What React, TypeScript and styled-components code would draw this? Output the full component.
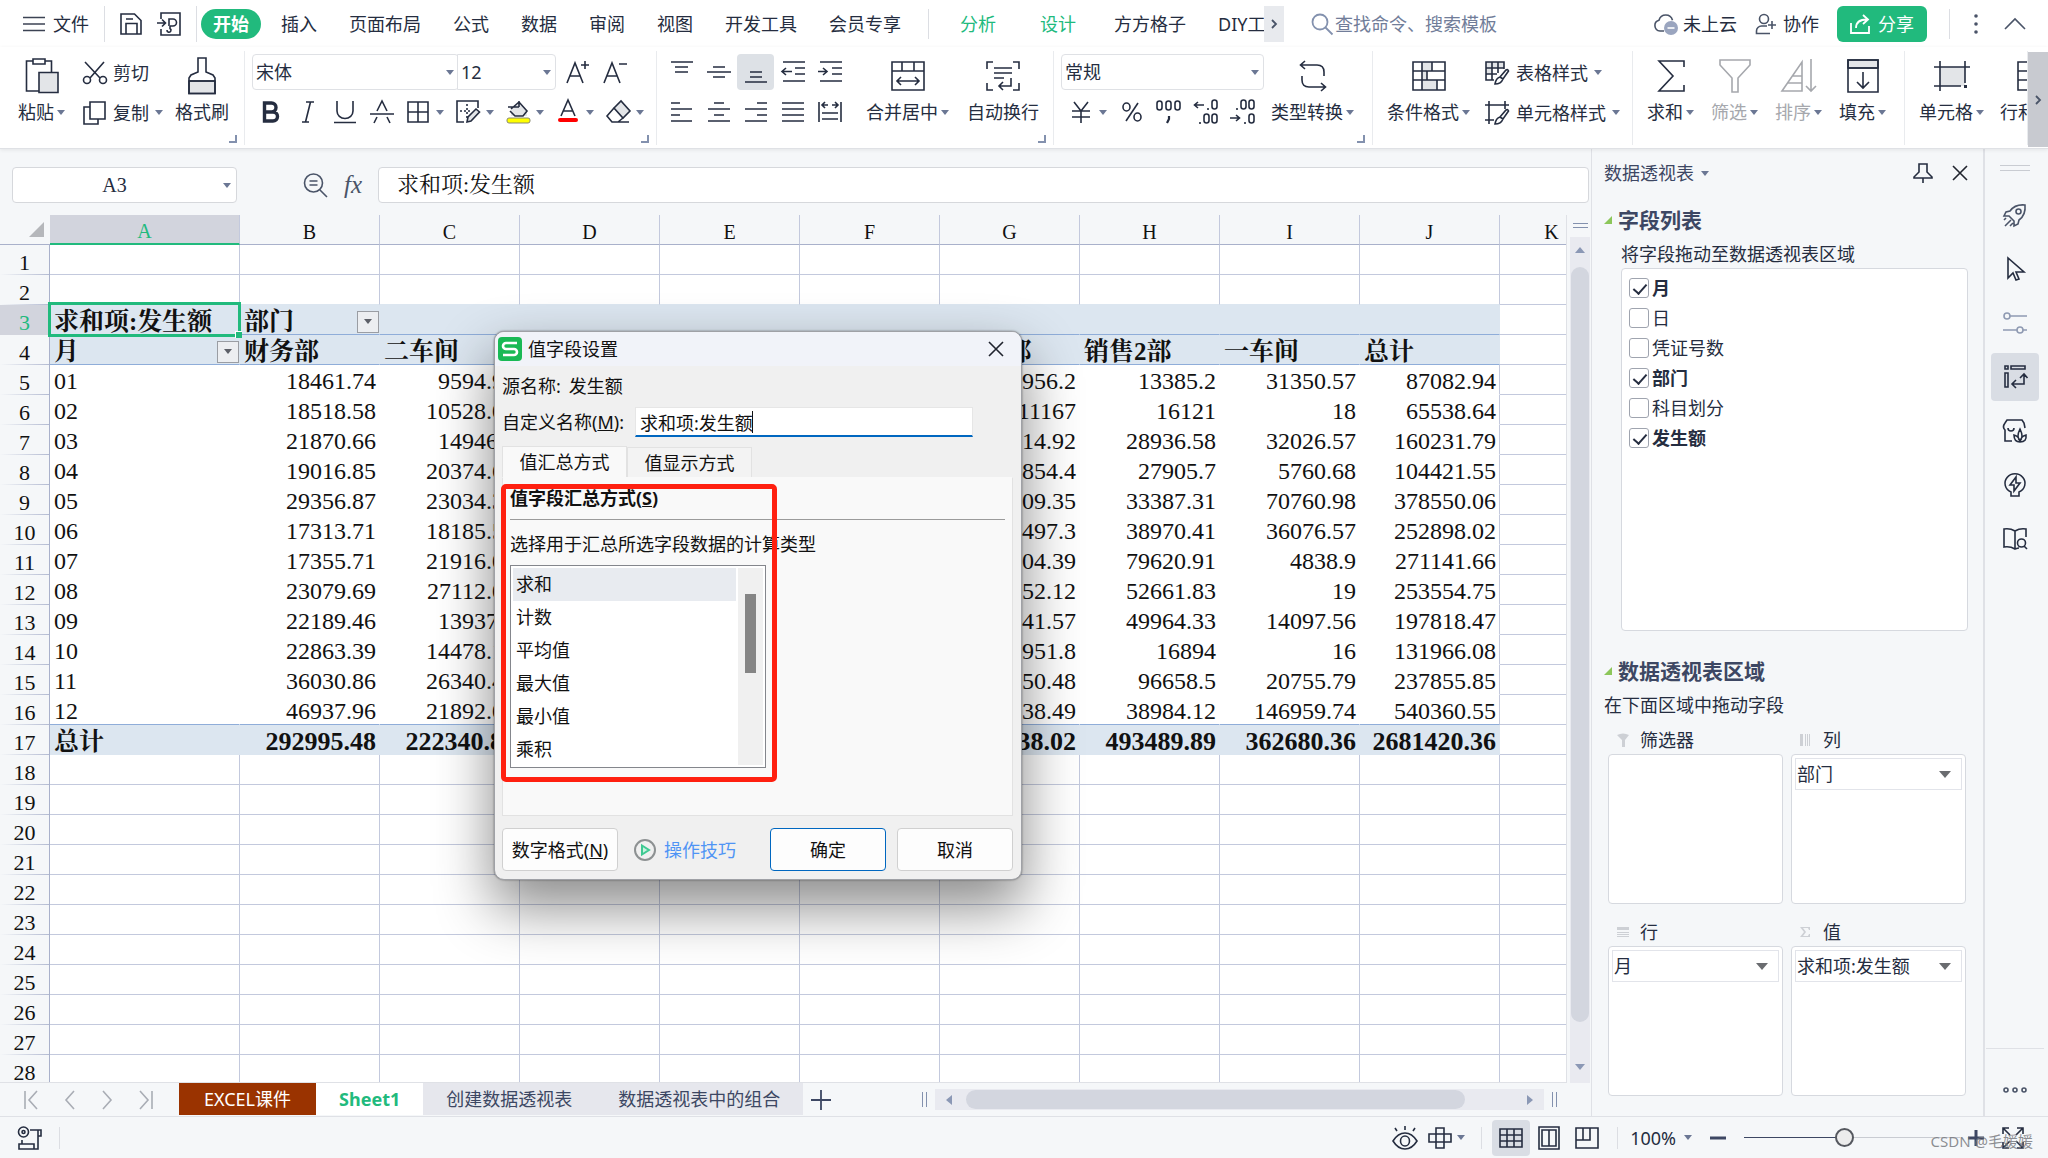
import React from "react";
import styled, { createGlobalStyle, css } from "styled-components";

const UI = `"Noto Sans", "Noto Sans CJK SC", sans-serif`;
const SONG = `"Liberation Serif", "Noto Serif CJK SC", "Noto Sans CJK SC", serif`;
const INK = "#252d40";
const SLATE = "#6b7794";
const GREEN = "#21ba7d";
const GRID = "#c3c9dd";
const RULE = "#8fadd9";
const BAND = "#dce6f0";
const PAPER = "#f5f7f9";

const GlobalStyle = createGlobalStyle`
  * { box-sizing: border-box; }
  body { margin: 0; background: ${PAPER}; color: ${INK}; font: 18px/24px ${UI}; overflow: hidden; }
  button, input, select { font: inherit; color: inherit; margin: 0; padding: 0; border: 0; background: none; outline: none; }
  button { cursor: pointer; white-space: nowrap; }
  select { appearance: none; }
  svg { display: block; flex: none; overflow: visible; }
`;

/* ---------- icons ---------- */

type IcoProps = { w?: number; h?: number; color?: string; sw?: number; children: React.ReactNode };
const Ico = ({ w = 24, h = 24, color = INK, sw = 2, children }: IcoProps) => (
  <svg width={w} height={h} viewBox={`0 0 ${w} ${h}`} fill="none" stroke={color} strokeWidth={sw} aria-hidden="true">
    {children}
  </svg>
);
const Caret = ({ color = SLATE }: { color?: string }) => (
  <svg width="8" height="5" viewBox="0 0 8 5" aria-hidden="true"><path d="M0 0h8L4 5z" fill={color} /></svg>
);
const T = 1.6;
const FILL = "#e3e5e8";

const MenuIcon = () => <Ico w={22} h={16} sw={1.6} color="#3c4354"><path d="M0 1.5h22M0 8h22M0 14.5h22" /></Ico>;
const SaveIcon = () => <Ico w={22} h={22} sw={T}><path d="M1 1h13.500l6.500 6.500V21H1zM6 21v-10.500h11V21M6 6h7" /></Ico>;
const ExportIcon = () => (
  <Ico w={24} h={24} sw={T}><path d="M4 7V1h19v22H4v-6M0 11h8M5 7.500l3.500 3.500L5 14.500M12 14V7h4a3.500 3.500 0 0 1 0 7h-3M13 14v2.500a2 2 0 1 1-3 1.500" /></Ico>
);
const SearchIcon = () => <Ico w={22} h={22} sw={1.8} color="#8391ae"><circle cx="9" cy="9" r="7.500" /><path d="M14.500 14.500l7 7" /></Ico>;
const CloudIcon = () => (
  <Ico w={26} h={22} sw={T} color="#4a5468">
    <path d="M11 18H7a5.500 5.500 0 0 1-1-10.800 7 7 0 0 1 13.500 0" />
    <circle cx="18" cy="15" r="7" fill="#9aa5bf" stroke="none" /><path d="M14.500 15h7" stroke="#fff" />
  </Ico>
);
const PersonIcon = () => (
  <Ico w={22} h={22} sw={T} color="#4a5468"><circle cx="9" cy="6" r="4.500" /><path d="M15 20.500H1.500V18a5 5 0 0 1 5-5H12M17 8v8M13 12h8" /></Ico>
);
const ShareIcon = () => <Ico w={20} h={20} sw={1.8} color="#fff"><path d="M1 9v10h18v-7M6 14c0-6 4-8.500 11-8.500M13 1l5 4.500-5 4.500" /></Ico>;
const DotsIcon = () => (
  <Ico w={4} h={20}><g fill="#4a5468" stroke="none"><circle cx="2" cy="2" r="1.800" /><circle cx="2" cy="10" r="1.800" /><circle cx="2" cy="18" r="1.800" /></g></Ico>
);
const UpIcon = () => <Ico w={22} h={12} sw={T} color="#4a5468"><path d="M1 11L11 1l10 10" /></Ico>;
const ChevronIcon = () => <Ico w={6} h={10} sw={1.8} color="#4a5468"><path d="M1 1l4 4-4 4" /></Ico>;

const PasteIcon = () => (
  <Ico w={34} h={36} sw={T}><path d="M8 3H1.500v30H14M20 3h6.500v11" /><path d="M8 1h12v5H8z" /><path d="M14 14.500h19v20H14z" fill={FILL} /></Ico>
);
const CutIcon = () => <Ico sw={T}><path d="M2 1l15 16M21 1L7 17" /><circle cx="4" cy="19" r="3.500" /><circle cx="20" cy="19" r="3.500" /></Ico>;
const CopyIcon = () => <Ico sw={T}><path d="M7 6H1v17h14v-5" /><path d="M7 1h15v17H7z" /></Ico>;
const BrushIcon = () => (
  <Ico w={30} h={38} sw={T}><path d="M2 24h26v12.500H2z" fill={FILL} /><path d="M11 1h8v14l7 3 2 3v15.500H2V21l2-3 7-3zM2 24h26" /></Ico>
);
const FontUpIcon = () => <Ico sw={T}><path d="M1 23L9 3l8 20M4 16h10M19 1v8M15 5h8" /></Ico>;
const FontDownIcon = () => <Ico sw={T}><path d="M1 23L9 3l8 20M4 16h10M16 4h8" /></Ico>;
const BoldIcon = () => <Ico w={18} h={22} sw={3.4}><path d="M2.500 2h7a4.500 4.500 0 0 1 0 9h-7zM2.500 11h8.500a4.500 4.500 0 0 1 0 9H2.500z" /></Ico>;
const ItalicIcon = () => <Ico w={14} h={22} sw={T}><path d="M5 1h8M1 21h7M9.500 1L4.500 21" /></Ico>;
const UnderIcon = () => <Ico w={22} h={22} sw={T}><path d="M3 0v10a8 7.500 0 0 0 16 0V0M0 21.500h22" /></Ico>;
const StrikeIcon = () => <Ico w={24} h={22} sw={T}><path d="M4 22l3-6M7 10l5-10 5 10M17 16l3 6M0 13h24" /></Ico>;
const BorderIcon = () => <Ico w={22} h={22} sw={T}><path d="M1 1h20v20H1zM11 1v20M1 11h20" /></Ico>;
const DrawBorderIcon = () => (
  <Ico sw={T}><path d="M22 8V1H1v21h7" /><path d="M4 11h10M11 4v14" strokeDasharray="2 2" /><path d="M11 22l1-5 8-8 3.500 3L15 21z" fill={FILL} /></Ico>
);
const FillIcon = () => (
  <Ico sw={T}><path d="M5 10l8-8 8 9v5H5z" fill={FILL} stroke="none" /><path d="M5 9l8-7 8 9-4 5H9L4 11M2 7h11M13 1v6" /><rect x="1" y="18" width="23" height="5" rx="2" fill="#ffff00" stroke="#8a8a70" strokeWidth="1" /></Ico>
);
const FontColorIcon = () => <Ico sw={T}><path d="M5 16L12 0l7 16M7 11h10" /><rect x="2" y="18" width="20" height="4" rx="2" fill="#f00" stroke="none" /></Ico>;
const EraserIcon = () => <Ico sw={T}><path d="M8 8l7-7 9 10-7 7z" fill={FILL} /><path d="M8 8l-7 8 5 6h6l5-4M6 22h17" /></Ico>;

const lines = (rows: [number, number, number][]) => rows.map(([x1, x2, y]) => `M${x1} ${y}H${x2}`).join("");
const LineIcon = ({ d }: { d: string }) => <Ico w={24} h={24} sw={T}><path d={d} /></Ico>;
const VTop = () => <LineIcon d={lines([[1, 23, 2], [5, 18, 7], [5, 18, 12]])} />;
const VMid = () => <LineIcon d={lines([[6, 18, 7], [0, 24, 12], [6, 18, 17]])} />;
const VBot = () => <LineIcon d={lines([[6, 18, 12], [6, 18, 17], [1, 23, 22]])} />;
const Outdent = () => <LineIcon d={lines([[2, 24, 2], [14, 24, 8], [14, 24, 14], [2, 24, 21]]) + "M1 11.500h10M5 8l-4 3.500 4 3.500"} />;
const Indent = () => <LineIcon d={lines([[2, 24, 2], [14, 24, 8], [14, 24, 14], [2, 24, 21]]) + "M0 11.500h9M5 8l4 3.500-4 3.500"} />;
const ALeft = () => <LineIcon d={lines([[1, 10, 3], [1, 22, 9], [1, 10, 15], [1, 22, 21]])} />;
const ACenter = () => <LineIcon d={lines([[7, 17, 3], [1, 23, 9], [7, 17, 15], [1, 23, 21]])} />;
const ARight = () => <LineIcon d={lines([[13, 23, 3], [1, 23, 9], [13, 23, 15], [1, 23, 21]])} />;
const AJustify = () => <LineIcon d={lines([[1, 23, 3], [1, 23, 9], [1, 23, 15], [1, 23, 21]])} />;
const Distribute = () => <LineIcon d="M1 2v20M23 2v20M4 13h16M4 19h16M4 5h6M14 5h6M7 2L4 5l3 3M17 2l3 3-3 3" />;
const MergeIcon = () => <Ico w={34} h={30} sw={T}><path d="M1 1h32v28H1zM1 10h32M11 1v9M23 1v9M6 20h22M10 16l-4 4 4 4M24 16l4 4-4 4" /></Ico>;
const WrapIcon = () => (
  <Ico w={34} h={30} sw={T}><path d="M7 1H1v7M27 1h6v7M7 29H1v-7M27 29h6v-7M8 7h18M8 12h18M8 17h10M25 17v8H13M17 21l-4 4 4 4" /></Ico>
);
const YenIcon = () => <Ico w={20} h={22} sw={T}><path d="M3 1l7 9 7-9M10 10v12M1 10h18M1 16h18" /></Ico>;
const PercentIcon = () => <Ico w={20} h={20} sw={T}><ellipse cx="4.500" cy="5" rx="3.500" ry="4" /><ellipse cx="15.500" cy="15" rx="3.500" ry="4" /><path d="M16 1L4 19" /></Ico>;
const oval = (x: number, y: number) => <rect key={`${x}-${y}`} x={x} y={y} width="5" height="9" rx="2.500" />;
const ThousandIcon = () => <Ico w={26} h={24} sw={T}>{oval(1, 1)}{oval(10, 1)}{oval(19, 1)}<path d="M13 16v3l-2 4" strokeWidth="2.200" /></Ico>;
const DecAddIcon = () => <Ico w={26} h={24} sw={T}>{oval(19, 0)}{oval(11, 14)}{oval(19, 14)}<path d="M1 5h10M5 2L1.500 5 5 8M15 8v2M7 22v2" /></Ico>;
const DecCutIcon = () => <Ico w={26} h={24} sw={T}>{oval(11, 0)}{oval(19, 0)}{oval(19, 14)}<path d="M0 18h10M6 15l3.500 3L6 21M7 8v2M15 22v2" /></Ico>;
const ConvertIcon = () => (
  <Ico w={28} h={32} sw={T}><path d="M1.500 5H18q7 0 7 7v4M6 1L1.500 5 6 9M26.500 27H10q-7 0-7-7v-4M22 23l4.500 4-4.500 4" /></Ico>
);
const CondIcon = () => (
  <Ico w={34} h={30} sw={T}>
    <path d="M10 1h10v9H10zM10 10h5v9h-5zM10 19h15v10H10z" fill={FILL} stroke="none" />
    <path d="M1 1h32v28H1zM1 10h32M1 19h32M10 1v28M20 1v9M15 10v9M25 19v10" />
  </Ico>
);
const BrushTip = () => <path d="M15 16l6-7q2-1 2.500 1L18 18zM15 16q-4 1-5 7 6 0 8-5z" fill="#fff" />;
const TableStyleIcon = () => (
  <Ico w={25} h={24} sw={T}><path d="M1 1h18v6H7v6H1z" fill={FILL} stroke="none" /><path d="M9 19H1V1h18v7M1 7h18M1 13h11M7 1v18M13 1v11" /><BrushTip /></Ico>
);
const CellStyleIcon = () => (
  <Ico w={25} h={24} sw={T}><path d="M4 0v23M0 4h24M20 0v8M0 19h9" /><BrushTip /></Ico>
);
const SumIcon = () => <Ico w={28} h={32} sw={T}><path d="M27 7V1H2l14 15L2 31h25v-6" /></Ico>;
const FilterIcon = () => <Ico w={32} h={34} sw={T} color="#a6a8ad"><path d="M1 1h30v5L19 19v14h-6V19L1 6z" /></Ico>;
const SortIcon = () => <Ico w={36} h={34} sw={T} color="#a6a8ad"><path d="M1 32h20V3zM11 17h10M6 24h15M30 0v32M25 27l5 5 5-5" /></Ico>;
const FillDownIcon = () => <Ico w={32} h={34} sw={T}><path d="M1 1h30v8H1z" fill={FILL} /><path d="M1 1h30v32H1zM1 9h30M16 13v15M10 23l6 6 6-6" /></Ico>;
const CellIcon = () => (
  <Ico w={36} h={30} sw={T}><path d="M6 6h25v19H6z" fill={FILL} stroke="none" /><path d="M0 6h36M0 25h27M6 0v30M31 0v22" /><path d="M30 24h3v3h-3z" fill={INK} stroke="none" /></Ico>
);
const RowColIcon = () => <Ico w={34} h={30} sw={T}><path d="M8 1h25v28H8zM8 10h25M8 19h25M18 1v28" /></Ico>;
const LauncherIcon = () => <Ico w={8} h={8} sw={2} color="#8391ae"><path d="M0 7h7V0" /></Ico>;

const LensIcon = () => <Ico w={24} h={24} sw={T} color="#4a5468"><circle cx="10.500" cy="10" r="9" /><path d="M17 17l7 7M6.500 8h8M6.500 12h8" /></Ico>;
const PinIcon = () => <Ico w={20} h={20} sw={T}><path d="M6 1h8v8l5 5v1H1v-1l5-5zM10 15v5" /></Ico>;
const CloseIcon = () => <Ico w={16} h={16} sw={T} color="#20242e"><path d="M1 1l14 14M15 1L1 15" /></Ico>;

const RocketIcon = () => (
  <Ico sw={T} color="#4a5468"><path d="M7 8Q12 1 22 2q1 10-6 15l-1 4-4 2v-5L6 13H1l2-4zM3 15l-2 2M8 17l-6 6M10 20l-3 3" /><circle cx="15.500" cy="8.500" r="2.500" /></Ico>
);
const PointerIcon = () => <Ico sw={T}><path d="M5 1v20l5-5 3 7 3-1-3-7h8z" /></Ico>;
const SlidersIcon = () => <Ico sw={T} color="#8f9ab2"><circle cx="4" cy="5" r="3" /><path d="M7 5h17M0 19h14M20 19h4" /><circle cx="17" cy="19" r="3" /></Ico>;
const PivotIcon = () => <Ico sw={T}><path d="M2 1h3v3H2zM8 1h14v3H8zM2 8h3v14H2zM10 19h11V9M13 15l-4 4 4 4M17 13l4-4 3.500 4" /></Ico>;
const GalleryIcon = () => (
  <Ico sw={T}><path d="M9 22H2V11q-3-3 0-7l2-3h15l2 3 1 5M5 9q0 3 3 3t3-3" /><path d="M17 22q-4-4 0-12 4 8 0 12zM17 23q-6 0-6-7 5 1 6 7zM17 23q1-6 6-7 1 7-6 7z" /></Ico>
);
const BulbIcon = () => <Ico sw={T}><path d="M8 23h8v-4a10 9.500 0 1 0-8 0zM13 4l-6 8h4v6l6-8h-4z" /></Ico>;
const BookIcon = () => <Ico sw={T}><path d="M12 4Q7 1 1 2v18q6-1 11 2 3-1 4-1M12 4q5-3 11-2v8M12 4v18" /><circle cx="18.500" cy="16" r="4" /><path d="M21 19l3 3" /></Ico>;
const MoreIcon = () => <Ico w={24} h={6} sw={T} color="#4a5468"><circle cx="3" cy="3" r="2" /><circle cx="12" cy="3" r="2" /><circle cx="21" cy="3" r="2" /></Ico>;

const WpsLogo = () => (
  <svg width="24" height="24" viewBox="0 0 24 24" aria-hidden="true">
    <rect width="24" height="24" rx="4" fill="#19b955" />
    <path d="M19 6H8a3 3 0 0 0 0 6h8a3 3 0 0 1 0 6H5" fill="none" stroke="#fff" strokeWidth="2.600" />
  </svg>
);
const PlayIcon = () => <Ico w={22} h={22} sw={2} color="#8d9192"><circle cx="11" cy="11" r="10" /><path d="M8 6.500l7 4.500-7 4.500z" stroke="#3fc992" fill="#c9f2e0" /></Ico>;

const EyeIcon = () => <Ico sw={T}><path d="M0 15q5-8 12-8t12 8q-5 8-12 8T0 15zM12 0v4M2 2l2 3M22 2l-2 3" /><ellipse cx="12" cy="15" rx="4.500" ry="5" /></Ico>;
const CrossIcon = () => <Ico sw={T}><path d="M8 2h8v20H8zM1 8h22v8H1z" /></Ico>;
const NormalViewIcon = () => <Ico sw={T}><path d="M1 3h22v18H1zM1 9h22M1 15h22M8 3v18M15 3v18" /></Ico>;
const PageViewIcon = () => <Ico w={22} sw={T}><path d="M1 1h20v22H1zM4 4h14v16H4zM11 4v16" /></Ico>;
const BreakViewIcon = () => <Ico sw={T}><path d="M1 2h22v20H1zM1 14h14V2M8 2v12" /></Ico>;
const FullIcon = () => <Ico w={22} h={22} sw={T}><path d="M14 8l7-7M15 1h6v6M8 8L1 1M1 7V1h6M14 14l7 7M15 21h6v-6M8 14l-7 7M1 15v6h6" /></Ico>;
const MacroIcon = () => <Ico sw={T}><circle cx="5.500" cy="6" r="5" /><circle cx="5.500" cy="6" r="1.500" /><path d="M12 4h11v6h-3M20 4v19H1v-5h15v5M4 18v-4" /></Ico>;

/* ---------- shell ---------- */

const Page = styled.div`position: relative; height: 100vh; display: flex; flex-direction: column;`;
const Main = styled.main`flex: 1; min-height: 0; display: flex;`;
const Workspace = styled.section`flex: 1; min-width: 0; display: flex; flex-direction: column;`;

const VSep = styled.span<{ $h?: number; $m?: string }>`
  flex: none; width: 1px; height: ${p => p.$h ?? 36}px; margin: ${p => p.$m ?? "0"}; background: #dcdee3;
`;

/* ---------- menu bar ---------- */

const MenuBar = styled.nav`display: flex; align-items: center; height: 47px; background: #fff;`;
const MenuButton = styled.button<{ $gap?: number }>`display: flex; align-items: center; gap: ${p => p.$gap ?? 8}px;`;
const QuickAccess = styled.div`display: flex; align-items: center; gap: 15px; padding-left: 23px; width: 201px; overflow: hidden;`;
const TabStrip = styled.div`flex: 0 1 1063px; min-width: 0; display: flex; align-items: center; overflow: hidden;`;
const MenuTab = styled.button<{ $tone?: "active" | "context" }>`
  flex: none; padding: 0 16px;
  ${p => p.$tone === "active" && css`width: 60px; height: 30px; padding: 0; margin-right: 4px; border-radius: 15px; background: ${GREEN}; color: #fff; font-weight: 700;`}
  ${p => p.$tone === "context" && css`padding: 0 22px; color: ${GREEN};`}
`;
const StripNext = styled.button`flex: none; display: grid; place-items: center; width: 20px; height: 36px; background: #e8eaee;`;
const Search = styled.label`display: flex; align-items: center; gap: 2px; margin-left: 27px; color: #717d99;`;
const SearchInput = styled.input`width: 180px; &::placeholder { color: #717d99; opacity: 1; }`;
const MenuRight = styled.div`display: flex; align-items: center; gap: 18px; margin-left: auto; padding-right: 22px;`;
const ShareButton = styled.button`display: flex; align-items: center; justify-content: center; gap: 8px; width: 90px; height: 36px; border-radius: 6px; background: ${GREEN}; color: #fff;`;
const CollapseButton = styled.button`padding-left: 8px;`;

/* ---------- ribbon ---------- */

const Ribbon = styled.div`display: flex; height: 102px; background: #fff; border-bottom: 1px solid #dfe1e5; box-shadow: 0 1px 4px rgba(0, 0, 0, 0.08); z-index: 1;`;
const Group = styled.div<{ $w?: number; $pad: number; $gap?: number }>`
  position: relative; flex: ${p => (p.$w ? `none` : "1")}; width: ${p => (p.$w ? `${p.$w}px` : "auto")}; min-width: 0;
  display: flex; align-items: flex-start; gap: ${p => p.$gap ?? 0}px; margin: 4px 0 3px; padding: 3px 0 0 ${p => p.$pad}px;
  overflow: hidden; border-right: 1px solid #e9ebee;
`;
const Launcher = styled.button`position: absolute; right: 7px; bottom: 2px; width: 8px; height: 8px;`;
const BigTool = styled.button<{ $off?: boolean }>`flex: none; display: flex; flex-direction: column; align-items: center; gap: 4px; padding-top: 2px; color: ${p => (p.$off ? "#a6a8ad" : INK)};`;
const BigIcon = styled.span`display: grid; place-items: center; height: 40px;`;
const BigLabel = styled.span`display: flex; align-items: center; gap: 3px; height: 24px;`;
const Stack = styled.div<{ $m?: string }>`flex: none; display: flex; flex-direction: column; gap: 4px; margin: ${p => p.$m ?? "0"};`;
const Row = styled.div<{ $pad?: number }>`display: flex; align-items: center; height: 36px; padding-left: ${p => p.$pad ?? 0}px;`;
const SmallTool = styled.button`display: flex; align-items: center; gap: 6px; height: 36px; padding-top: 1px;`;
const IconTool = styled.button<{ $on?: boolean }>`
  flex: none; display: grid; place-items: center; width: 37px; height: 36px; border-radius: 4px; background: ${p => (p.$on ? "#dde1e6" : "transparent")};
`;
const SplitTool = styled.button`flex: none; display: flex; align-items: center; gap: 6px; width: 50px; height: 36px; padding-left: 6px;`;
const SplitIcon = styled.span`display: grid; place-items: center; width: 24px;`;
const Combo = styled.span<{ $w: number; $joined?: boolean }>`
  flex: none; display: grid; align-items: center; width: ${p => p.$w}px; height: 36px; border: 1px solid #dfe1e5;
  border-radius: ${p => (p.$joined ? "0 4px 4px 0" : "4px")}; margin: ${p => (p.$joined ? "0 3px 0 -2px" : "0")}; background: #fff;
  > * { grid-area: 1 / 1; }
  > select { width: 100%; height: 100%; padding-left: 3px; }
  > svg { justify-self: end; margin-right: 4px; pointer-events: none; }
`;
const RibbonNext = styled.button`flex: none; display: grid; place-items: center; width: 20px; margin: 5px 0 1px; background: #c8cad0;`;

/* ---------- formula bar ---------- */

const FormulaBar = styled.div`display: flex; align-items: center; height: 66px; padding: 6px 2px 0 12px;`;
const NameBox = styled.span`
  display: grid; align-items: center; width: 225px; height: 36px; border: 1px solid #d6d8dc; border-radius: 4px; background: #fff;
  > * { grid-area: 1 / 1; }
  > input { width: 100%; padding-right: 20px; text-align: center; font: 20px/34px ${SONG}; }
  > svg { justify-self: end; margin-right: 5px; }
`;
const FormulaTools = styled.div`display: flex; align-items: center; gap: 14px; padding: 0 13px 0 66px;`;
const FxButton = styled.button`width: 24px; font: italic 25px/28px "Liberation Serif", serif; color: #4a5468;`;
const FormulaInput = styled.input`flex: 1; min-width: 0; height: 36px; padding: 0 18px 5px; border: 1px solid #d6d8dc; border-radius: 4px; background: #fff; font: 22px/30px ${SONG}; color: #111;`;

/* ---------- sheet ---------- */

const SheetArea = styled.div`flex: 1; min-height: 0; display: flex;`;
const SheetClip = styled.div`flex: 1; min-width: 0; overflow: hidden; border-right: 1px solid #dfe1e6; border-bottom: 1px solid #dfe1e6; background: #fff;`;
const Sheet = styled.table`width: 1604px; table-layout: fixed; border-collapse: separate; border-spacing: 0; font: 24px/25px ${SONG}; color: #111;`;
const Col = styled.col<{ $w: number }>`width: ${p => p.$w}px;`;
const Corner = styled.td`height: 30px; padding: 0 6px 7px 0; background: ${PAPER}; border-bottom: 1px solid #a9b1cb; vertical-align: bottom; > svg { margin-left: auto; }`;
const ColHead = styled.th<{ $on?: boolean }>`
  height: 30px; padding: 5px 0 0; font-size: 20px; line-height: 23px; font-weight: 400;
  background: ${p => (p.$on ? "#d2d4dd" : PAPER)}; color: ${p => (p.$on ? GREEN : "#111")};
  border-right: 1px solid #c3c9dd; border-bottom: ${p => (p.$on ? `2px solid ${GREEN}` : "1px solid #a9b1cb")};
`;
const RowHead = styled.th<{ $on?: boolean }>`
  height: 30px; padding: 4px 0 0; font-size: 22px; line-height: 25px; font-weight: 400; color: ${p => (p.$on ? GREEN : "#111")};
  background: ${p => (p.$on ? "#d2d4dd" : `linear-gradient(90deg, ${PAPER}, #b4bbd2) bottom / 100% 1px no-repeat ${PAPER}`)};
  border-right: 1px solid #a9b1cb;
`;
type Tone = "grid" | "body" | "band";
const Cell = styled.td<{ $tone: Tone; $right: string; $bottom: string; $num?: boolean; $bold?: boolean }>`
  position: relative; height: 30px; padding: 4px 3px 0 4px; white-space: nowrap;
  background: ${p => (p.$tone === "band" ? BAND : "#fff")};
  border-right: 1px solid ${p => p.$right}; border-bottom: 1px solid ${p => p.$bottom};
  text-align: ${p => (p.$num ? "right" : "left")};
  ${p => p.$bold && css`font-weight: 700; font-size: ${p.$num ? 26 : 25}px;`}
`;
const FilterCell = styled.div`display: flex; justify-content: space-between; align-items: center; height: 25px; margin-right: -3px;`;
const FilterButton = styled.button`display: grid; place-items: center; width: 22px; height: 22px; border: 1px solid #9a9da3; background: #eceef1;`;
const Selection = styled.span`
  position: absolute; inset: -3px -2px; border: 3px solid ${GREEN}; pointer-events: none; z-index: 1;
  &::after { content: ""; position: absolute; right: -4px; bottom: -4px; width: 6px; height: 6px; background: ${GREEN}; border: solid #fff; border-width: 1px 0 0 1px; }
`;

const LETTERS = ["A", "B", "C", "D", "E", "F", "G", "H", "I", "J", "K"];
const BODY: string[][] = [
  ["01", "18461.74", "9594.93", "", "", "", "12956.2", "13385.2", "31350.57", "87082.94"],
  ["02", "18518.58", "10528.06", "", "", "", "11167", "16121", "18", "65538.64"],
  ["03", "21870.66", "14946.7", "", "", "", "21614.92", "28936.58", "32026.57", "160231.79"],
  ["04", "19016.85", "20374.62", "", "", "", "19854.4", "27905.7", "5760.68", "104421.55"],
  ["05", "29356.87", "23034.36", "", "", "", "27509.35", "33387.31", "70760.98", "378550.06"],
  ["06", "17313.71", "18185.57", "", "", "", "16497.3", "38970.41", "36076.57", "252898.02"],
  ["07", "17355.71", "21916.07", "", "", "", "24504.39", "79620.91", "4838.9", "271141.66"],
  ["08", "23079.69", "27112.05", "", "", "", "20152.12", "52661.83", "19", "253554.75"],
  ["09", "22189.46", "13937.8", "", "", "", "19541.57", "49964.33", "14097.56", "197818.47"],
  ["10", "22863.39", "14478.19", "", "", "", "16951.8", "16894", "16", "131966.08"],
  ["11", "36030.86", "26340.45", "", "", "", "31750.48", "96658.5", "20755.79", "237855.85"],
  ["12", "46937.96", "21892.09", "", "", "", "27338.49", "38984.12", "146959.74", "540360.55"],
];
const VALUES: Record<number, string[]> = {
  3: ["求和项:发生额", "部门"],
  4: ["月", "财务部", "二车间", "", "", "", "销售1部", "销售2部", "一车间", "总计"],
  17: ["总计", "292995.48", "222340.89", "", "", "", "249638.02", "493489.89", "362680.36", "2681420.36"],
};
BODY.forEach((r, i) => { VALUES[i + 5] = r; });

const SheetRow = ({ n }: { n: number }) => {
  const values = VALUES[n] ?? [];
  const band = n === 3 || n === 4 || n === 17;
  const body = n >= 5 && n <= 16;
  return (
    <tr>
      <RowHead scope="row" $on={n === 3}>{n}</RowHead>
      {LETTERS.map((l, c) => {
        const outside = c === 10;
        const tone: Tone = outside ? "grid" : band ? "band" : body ? "body" : "grid";
        let right = GRID;
        let bottom = GRID;
        if (!outside) {
          if (tone === "band") right = BAND;
          if (tone === "body" && c < 9) right = "#fff";
          if (n === 2 || n === 17) bottom = BAND;
          if (n === 3 || n === 4 || n === 16) bottom = RULE;
          if (n >= 5 && n < 16) bottom = "#fff";
        }
        const text = values[c] ?? "";
        const filter = (n === 3 && c === 1) || (n === 4 && c === 0);
        return (
          <Cell key={l} $tone={tone} $right={right} $bottom={bottom} $bold={band} $num={(body || n === 17) && c > 0}>
            {filter ? (
              <FilterCell>{text}<FilterButton aria-label={`筛选${text}`}><Caret color="#5d6068" /></FilterButton></FilterCell>
            ) : text}
            {n === 3 && c === 0 && <Selection />}
          </Cell>
        );
      })}
    </tr>
  );
};

const VScroll = styled.div`flex: none; display: flex; flex-direction: column; align-items: center; gap: 9px; width: 24px; padding: 8px 0 0 2px;`;
const SplitGrip = styled.span`width: 15px; height: 5px; border: solid #8391ae; border-width: 1px 0;`;
const VTrack = styled.div`flex: 1; display: flex; flex-direction: column; align-items: center; justify-content: space-between; width: 20px; padding: 10px 0 13px; background: #e9eaf0;`;
const VThumb = styled.span`flex: 1; width: 18px; margin: 14px 0 42px; border-radius: 9px; background: #d3d6df;`;

/* ---------- sheet tabs ---------- */

const TabBar = styled.div`display: flex; align-items: center; height: 33px;`;
const TabNav = styled.div`display: flex; align-items: center; justify-content: space-between; width: 179px; padding: 0 26px 0 24px;`;
const SheetTab = styled.button<{ $kind?: "brown" | "active" }>`
  flex: none; height: 32px; align-self: flex-start; padding: 0 23px; background: #e6e7ed; color: #3d4763;
  ${p => p.$kind === "brown" && css`padding: 0 25px; background: #9a3300; color: #fff;`}
  ${p => p.$kind === "active" && css`background: #fff; color: ${GREEN}; font-weight: 700;`}
`;
const AddTab = styled.button`padding: 0 8px;`;
const HScrollWrap = styled.div`display: flex; align-items: center; gap: 8px; width: 669px; margin-left: auto; padding-right: 34px;`;
const HGrip = styled.span`flex: none; width: 5px; height: 15px; border: solid #8391ae; border-width: 0 1px;`;
const HTrack = styled.div`flex: 1; display: flex; align-items: center; height: 21px; padding: 0 11px; background: #e9eaf0;`;
const HThumb = styled.span`flex: 1; height: 19px; margin: 0 62px 0 14px; border-radius: 10px; background: #d3d6df;`;

/* ---------- pivot pane ---------- */

const Pane = styled.aside`flex: none; width: 392px; padding: 12px 15px 0 12px; border-left: 1px solid #dfe1e6;`;
const PaneHead = styled.div`display: flex; align-items: center; justify-content: space-between; height: 24px; color: #3d4763;`;
const PaneTitle = styled.button`display: flex; align-items: center; gap: 7px;`;
const PaneActions = styled.div`display: flex; align-items: center; gap: 19px; > button { display: block; }`;
const Heading = styled.h2<{ $top: number }>`
  display: flex; align-items: center; gap: 6px; margin: ${p => p.$top}px 0 0; font-size: 21px; line-height: 28px; font-weight: 700; color: #3d4763;
`;
const Hint = styled.p<{ $in?: number }>`margin: 8px 0 0; padding-left: ${p => p.$in ?? 0}px;`;
const FieldBox = styled.ul`list-style: none; height: 363px; margin: 2px 0 0 17px; padding: 4px 7px; border: 1px solid #d6d9df; border-radius: 4px; background: #fff;`;
const Field = styled.label<{ $on: boolean }>`display: flex; align-items: center; gap: 3px; height: 30px; font-weight: ${p => (p.$on ? 700 : 400)};`;
const Check = styled.input`
  appearance: none; position: relative; width: 20px; height: 20px; border: 1px solid #9fa4af; border-radius: 3px; background: #fff;
  &:checked::after { content: ""; position: absolute; left: 6px; top: 2px; width: 6px; height: 11px; border: solid ${INK}; border-width: 0 2px 2px 0; transform: rotate(42deg); }
`;
const Areas = styled.div`display: grid; grid-template-columns: 1fr 1fr; gap: 13px 8px; padding: 8px 2px 0 4px;`;
const AreaLabel = styled.div`display: flex; align-items: center; gap: 11px; height: 29px; padding-left: 9px;`;
const AreaIcon = styled.span`width: 12px;`;
const AreaBox = styled.div`height: 150px; padding: 3px; border: 1px solid #d6d9df; border-radius: 4px; background: #fff;`;
const FieldSelect = styled.span`
  display: grid; align-items: center; height: 32px; border: 1px solid #e2e4ea;
  > * { grid-area: 1 / 1; }
  > select { width: 100%; height: 100%; padding-left: 1px; }
  > svg { justify-self: end; margin-right: 10px; pointer-events: none; }
`;

const SideBar = styled.nav`flex: none; display: flex; flex-direction: column; align-items: center; gap: 6px; width: 65px; padding: 16px 3px 0 0; border-left: 2px solid #dfe1e6;`;
const SideGrip = styled.span`flex: none; width: 30px; height: 6px; margin-bottom: 14px; border: solid #c9ccd2; border-width: 1px 0;`;
const SideButton = styled.button<{ $on?: boolean }>`flex: none; display: grid; place-items: center; width: 48px; height: 48px; border-radius: 4px; background: ${p => (p.$on ? "#d9dde4" : "transparent")};`;
const SideFoot = styled.div`display: grid; place-items: center; align-content: center; width: 58px; height: 68px; margin-top: auto; padding-top: 14px; border-top: 1px solid #dfe1e6;`;

/* ---------- status bar ---------- */

const StatusBar = styled.footer`display: flex; align-items: center; height: 42px; padding: 0 24px 0 18px; border-top: 1px solid #dfe1e6;`;
const StatusRight = styled.div`display: flex; align-items: center; margin-left: auto;`;
const ModeTools = styled.div`display: flex; align-items: center; gap: 11px;`;
const ViewButton = styled.button<{ $on?: boolean }>`display: grid; place-items: center; width: 38px; height: 36px; border-radius: 4px; background: ${p => (p.$on ? "#d9dde4" : "transparent")};`;
const ZoomLabel = styled.button`display: flex; align-items: center; gap: 8px; margin-right: 18px;`;
const Slider = styled.input`
  appearance: none; width: 216px; height: 20px; margin: 0 8px 0 18px;
  &::-webkit-slider-runnable-track { height: 1px; background: linear-gradient(90deg, #3d4763 46%, #c9ccd2 46%); }
  &::-webkit-slider-thumb { appearance: none; width: 19px; height: 19px; margin-top: -9px; border: 2px solid #55585f; border-radius: 50%; background: #ececec; }
`;
const FullButton = styled.button`padding-left: 18px;`;
const Watermark = styled.span`position: absolute; right: 15px; bottom: 5px; font-size: 15px; color: rgba(120, 122, 128, 0.85);`;

/* ---------- dialog ---------- */

const Dialog = styled.section`
  position: absolute; left: 494px; top: 331px; z-index: 5; width: 528px; border: 1px solid #9fa1a6; border-radius: 10px; overflow: hidden;
  background: #f0f0f0; color: #111; box-shadow: 0 0 2px rgba(0, 0, 0, 0.5), 0 26px 56px 2px rgba(0, 0, 0, 0.45);
`;
const DialogHead = styled.header`display: flex; align-items: center; gap: 6px; height: 34px; padding: 0 17px 0 3px; background: #f1f3f9; > button { margin-left: auto; }`;
const DialogTitle = styled.h1`margin: 0; font-size: 18px; line-height: 24px; font-weight: 400;`;
const DialogBody = styled.div`padding: 8px 8px 8px 7px;`;
const Line = styled.div<{ $gap: number }>`display: flex; align-items: center; gap: ${p => p.$gap}px; height: 24px; margin-bottom: 12px;`;
const NameField = styled.span`
  position: relative; display: block; height: 30px;
  &::after { content: ""; position: absolute; left: 117px; top: 4px; width: 1px; height: 22px; background: #111; }
`;
const NameInput = styled.input`display: block; width: 338px; height: 30px; padding: 0 4px; border: 1px solid #e6e6e6; border-bottom: 2px solid #0067c0; background: #fff;`;
const TabRow = styled.div`display: flex; align-items: flex-end;`;
const DialogTab = styled.button<{ $on?: boolean }>`
  width: 125px; height: ${p => (p.$on ? 31 : 30)}px; border: 1px solid #e2e2e2; border-bottom: 0; background: ${p => (p.$on ? "#f9f9f9" : "#f3f3f3")};
`;
const TabPanel = styled.div`position: relative; height: 339px; padding: 8px 7px 0 7px; border: 1px solid #e2e2e2; border-top-color: #f9f9f9; background: #f9f9f9;`;
const PanelTitle = styled.h2`margin: 0; padding-bottom: 9px; border-bottom: 1px solid #9b9b9b; font-size: 18px; line-height: 24px; font-weight: 700;`;
const PanelText = styled.p`margin: 12px 0 9px; white-space: nowrap;`;
const ListFrame = styled.div`display: flex; width: 256px; height: 203px; padding: 2px; border: 1px solid #84868c; background: #fff;`;
const List = styled.ul`flex: 1; list-style: none; margin: 0; padding: 0; overflow: hidden;`;
const Option = styled.li<{ $on: boolean }>`height: 33px; padding: 4px 3px; background: ${p => (p.$on ? "#e8ebf0" : "#fff")};`;
const ListScroll = styled.div`width: 25px; margin-left: 2px; padding: 26px 7px 0; background: #f0f0f0; &::after { content: ""; display: block; height: 79px; background: #858585; }`;
const Marker = styled.span`position: absolute; left: -2px; top: 6px; width: 276px; height: 298px; border: 5px solid #ff2010; border-radius: 5px; pointer-events: none;`;
const DialogFoot = styled.footer`display: flex; align-items: center; margin-top: 12px;`;
const PushButton = styled.button<{ $primary?: boolean }>`width: 116px; height: 43px; border: 1px solid ${p => (p.$primary ? "#0067c0" : "#d0d0d0")}; border-radius: 4px; background: #fdfdfd;`;
const TipLink = styled.a`display: flex; align-items: center; gap: 8px; margin: 0 auto 0 16px; color: #4f94f5; text-decoration: none;`;
const DialogActions = styled.div`display: flex; gap: 11px;`;

const ValueFieldDialog = () => (
  <Dialog role="dialog" aria-label="值字段设置">
    <DialogHead><WpsLogo /><DialogTitle>值字段设置</DialogTitle><button aria-label="关闭"><CloseIcon /></button></DialogHead>
    <DialogBody>
      <Line $gap={8}><span>源名称:</span><span>发生额</span></Line>
      <Line $gap={11}>
        <label htmlFor="custom-name">自定义名称(<u>M</u>):</label>
        <NameField><NameInput id="custom-name" defaultValue="求和项:发生额" /></NameField>
      </Line>
      <TabRow><DialogTab $on>值汇总方式</DialogTab><DialogTab>值显示方式</DialogTab></TabRow>
      <TabPanel>
        <PanelTitle>值字段汇总方式(<u>S</u>)</PanelTitle>
        <PanelText>选择用于汇总所选字段数据的计算类型</PanelText>
        <ListFrame>
          <List role="listbox" aria-label="计算类型">
            {["求和", "计数", "平均值", "最大值", "最小值", "乘积"].map((o, i) => (
              <Option key={o} role="option" aria-selected={i === 0} $on={i === 0}>{o}</Option>
            ))}
          </List>
          <ListScroll />
        </ListFrame>
        <Marker />
      </TabPanel>
      <DialogFoot>
        <PushButton>数字格式(<u>N</u>)</PushButton>
        <TipLink href="#tips"><PlayIcon />操作技巧</TipLink>
        <DialogActions>
          <PushButton $primary>确定</PushButton>
          <PushButton>取消</PushButton>
        </DialogActions>
      </DialogFoot>
    </DialogBody>
  </Dialog>
);

/* ---------- assembly ---------- */

type BigProps = { icon: React.ReactNode; label: string; caret?: boolean; off?: boolean };
const Big = ({ icon, label, caret, off }: BigProps) => (
  <BigTool $off={off}><BigIcon>{icon}</BigIcon><BigLabel>{label}{caret && <Caret />}</BigLabel></BigTool>
);
const Split = ({ label, children }: { label: string; children: React.ReactNode }) => (
  <SplitTool aria-label={label}><SplitIcon>{children}</SplitIcon><Caret /></SplitTool>
);
const Picker = ({ label, value, w, joined }: { label: string; value: string; w: number; joined?: boolean }) => (
  <Combo $w={w} $joined={joined}><select aria-label={label}><option>{value}</option></select><Caret /></Combo>
);
const Triangle = () => <svg width="8" height="8" viewBox="0 0 8 8" aria-hidden="true"><path d="M8 0v8H0z" fill="#8cc65a" /></svg>;
const NAV = ["M1 0v18M13 0L5 9l8 9", "M9 0L1 9l8 9", "M1 0l8 9-8 9", "M1 0l8 9-8 9M13 0v18"];
const NAV_NAMES = ["第一张", "上一张", "下一张", "最后一张"];
const FIELDS: [string, boolean][] = [["月", true], ["日", false], ["凭证号数", false], ["部门", true], ["科目划分", false], ["发生额", true]];
const AREAS = [
  { label: "筛选器", value: "", icon: <path d="M0 2q6-3 12 0L8 7v7H5V7z" /> },
  { label: "列", value: "部门", icon: <path d="M0 1h3v12H0zM5 1h1v12H5zM7 1h1v12H7zM9 1h1v12H9z" /> },
  { label: "行", value: "月", icon: <path d="M0 2h12v3H0zM0 7h12v1H0zM0 9h12v1H0zM0 11h12v1H0z" /> },
  { label: "值", value: "求和项:发生额", icon: <path d="M0 2h10v3H9L8 3H3l3 4-3 4h5l1-2h1v3H0l4-5z" /> },
];

export default function App() {
  return (
    <Page>
      <GlobalStyle />
      <MenuBar>
        <QuickAccess>
          <MenuButton><MenuIcon />文件</MenuButton>
          <VSep />
          <MenuButton aria-label="保存"><SaveIcon /></MenuButton>
          <MenuButton aria-label="输出为PDF"><ExportIcon /></MenuButton>
          <VSep />
        </QuickAccess>
        <TabStrip>
          <MenuTab $tone="active">开始</MenuTab>
          {["插入", "页面布局", "公式", "数据", "审阅", "视图", "开发工具", "会员专享"].map(t => <MenuTab key={t}>{t}</MenuTab>)}
          <VSep $h={30} $m="0 9px 0 11px" />
          <MenuTab $tone="context">分析</MenuTab>
          <MenuTab $tone="context">设计</MenuTab>
          <MenuTab>方方格子</MenuTab>
          <MenuTab>DIY工具箱</MenuTab>
        </TabStrip>
        <StripNext aria-label="更多选项卡"><ChevronIcon /></StripNext>
        <Search><SearchIcon /><SearchInput aria-label="查找" placeholder="查找命令、搜索模板" /></Search>
        <MenuRight>
          <MenuButton $gap={4}><CloudIcon />未上云</MenuButton>
          <MenuButton $gap={6}><PersonIcon />协作</MenuButton>
          <ShareButton><ShareIcon />分享</ShareButton>
          <VSep $h={30} $m="0 6px 0 4px" />
          <MenuButton aria-label="更多"><DotsIcon /></MenuButton>
          <CollapseButton aria-label="收起功能区"><UpIcon /></CollapseButton>
        </MenuRight>
      </MenuBar>

      <Ribbon>
        <Group $w={245} $pad={18}>
          <Big icon={<PasteIcon />} label="粘贴" caret />
          <Stack $m="0 12px 0 18px">
            <SmallTool><CutIcon />剪切</SmallTool>
            <SmallTool><CopyIcon />复制<Caret /></SmallTool>
          </Stack>
          <Big icon={<BrushIcon />} label="格式刷" />
          <Launcher aria-label="剪贴板选项"><LauncherIcon /></Launcher>
        </Group>
        <Group $w={412} $pad={7}>
          <Stack>
            <Row>
              <Picker label="字体" value="宋体" w={207} />
              <Picker label="字号" value="12" w={99} joined />
              <IconTool aria-label="增大字号"><FontUpIcon /></IconTool>
              <IconTool aria-label="减小字号"><FontDownIcon /></IconTool>
            </Row>
            <Row>
              <IconTool aria-label="加粗"><BoldIcon /></IconTool>
              <IconTool aria-label="倾斜"><ItalicIcon /></IconTool>
              <IconTool aria-label="下划线"><UnderIcon /></IconTool>
              <IconTool aria-label="删除线"><StrikeIcon /></IconTool>
              <Split label="边框"><BorderIcon /></Split>
              <Split label="绘制边框"><DrawBorderIcon /></Split>
              <Split label="填充颜色"><FillIcon /></Split>
              <Split label="字体颜色"><FontColorIcon /></Split>
              <Split label="清除"><EraserIcon /></Split>
            </Row>
          </Stack>
          <Launcher aria-label="字体选项"><LauncherIcon /></Launcher>
        </Group>
        <Group $w={397} $pad={6} $gap={18}>
          <Stack>
            <Row>
              <IconTool aria-label="顶端对齐"><VTop /></IconTool>
              <IconTool aria-label="垂直居中"><VMid /></IconTool>
              <IconTool aria-label="底端对齐" $on><VBot /></IconTool>
              <IconTool aria-label="减少缩进"><Outdent /></IconTool>
              <IconTool aria-label="增加缩进"><Indent /></IconTool>
            </Row>
            <Row>
              <IconTool aria-label="左对齐"><ALeft /></IconTool>
              <IconTool aria-label="居中"><ACenter /></IconTool>
              <IconTool aria-label="右对齐"><ARight /></IconTool>
              <IconTool aria-label="两端对齐"><AJustify /></IconTool>
              <IconTool aria-label="分散对齐"><Distribute /></IconTool>
            </Row>
          </Stack>
          <Big icon={<MergeIcon />} label="合并居中" caret />
          <Big icon={<WrapIcon />} label="自动换行" />
          <Launcher aria-label="对齐选项"><LauncherIcon /></Launcher>
        </Group>
        <Group $w={319} $pad={7} $gap={7}>
          <Stack>
            <Row><Picker label="数字格式" value="常规" w={203} /></Row>
            <Row $pad={2}>
              <Split label="货币"><YenIcon /></Split>
              <IconTool aria-label="百分比"><PercentIcon /></IconTool>
              <IconTool aria-label="千位分隔"><ThousandIcon /></IconTool>
              <IconTool aria-label="增加小数位"><DecAddIcon /></IconTool>
              <IconTool aria-label="减少小数位"><DecCutIcon /></IconTool>
            </Row>
          </Stack>
          <Big icon={<ConvertIcon />} label="类型转换" caret />
          <Launcher aria-label="数字选项"><LauncherIcon /></Launcher>
        </Group>
        <Group $w={260} $pad={14} $gap={15}>
          <Big icon={<CondIcon />} label="条件格式" caret />
          <Stack>
            <SmallTool><TableStyleIcon />表格样式<Caret /></SmallTool>
            <SmallTool><CellStyleIcon />单元格样式<Caret /></SmallTool>
          </Stack>
        </Group>
        <Group $w={272} $pad={14} $gap={17}>
          <Big icon={<SumIcon />} label="求和" caret />
          <Big icon={<FilterIcon />} label="筛选" caret off />
          <Big icon={<SortIcon />} label="排序" caret off />
          <Big icon={<FillDownIcon />} label="填充" caret />
        </Group>
        <Group $pad={14} $gap={16}>
          <Big icon={<CellIcon />} label="单元格" caret />
          <Big icon={<RowColIcon />} label="行和列" />
        </Group>
        <RibbonNext aria-label="更多功能"><ChevronIcon /></RibbonNext>
      </Ribbon>

      <Main>
        <Workspace>
          <FormulaBar>
            <NameBox><input aria-label="名称框" defaultValue="A3" /><Caret /></NameBox>
            <FormulaTools>
              <button aria-label="浏览公式结果"><LensIcon /></button>
              <FxButton aria-label="插入函数">fx</FxButton>
            </FormulaTools>
            <FormulaInput aria-label="编辑栏" defaultValue="求和项:发生额" />
          </FormulaBar>
          <SheetArea>
            <SheetClip>
              <Sheet>
                <colgroup>
                  <Col $w={50} /><Col $w={190} />
                  {LETTERS.slice(1, 10).map(l => <Col key={l} $w={140} />)}
                  <Col $w={104} />
                </colgroup>
                <thead>
                  <tr>
                    <Corner><svg width="15" height="15" viewBox="0 0 15 15" aria-hidden="true"><path d="M15 0v15H0z" fill="#b5b7bb" /></svg></Corner>
                    {LETTERS.map((l, i) => <ColHead key={l} scope="col" $on={i === 0}>{l}</ColHead>)}
                  </tr>
                </thead>
                <tbody>{Array.from({ length: 28 }, (_, i) => <SheetRow key={i} n={i + 1} />)}</tbody>
              </Sheet>
            </SheetClip>
            <VScroll>
              <SplitGrip />
              <VTrack>
                <svg width="10" height="6" viewBox="0 0 10 6"><path d="M0 6h10L5 0z" fill="#8b98b5" /></svg>
                <VThumb />
                <svg width="10" height="6" viewBox="0 0 10 6"><path d="M0 0h10L5 6z" fill="#8b98b5" /></svg>
              </VTrack>
            </VScroll>
          </SheetArea>
          <TabBar>
            <TabNav>
              {NAV.map((d, i) => (
                <button key={d} aria-label={NAV_NAMES[i]}><Ico w={i % 3 ? 10 : 14} h={18} sw={1.6} color="#a9adb5"><path d={d} /></Ico></button>
              ))}
            </TabNav>
            <SheetTab $kind="brown">EXCEL课件</SheetTab>
            <SheetTab $kind="active">Sheet1</SheetTab>
            <SheetTab>创建数据透视表</SheetTab>
            <SheetTab>数据透视表中的组合</SheetTab>
            <AddTab aria-label="新建工作表"><Ico w={20} h={20} sw={1.8} color="#3d4763"><path d="M0 10h20M10 0v20" /></Ico></AddTab>
            <HScrollWrap>
              <HGrip />
              <HTrack>
                <svg width="6" height="10" viewBox="0 0 6 10"><path d="M6 0v10L0 5z" fill="#8b98b5" /></svg>
                <HThumb />
                <svg width="6" height="10" viewBox="0 0 6 10"><path d="M0 0v10l6-5z" fill="#8b98b5" /></svg>
              </HTrack>
              <HGrip />
            </HScrollWrap>
          </TabBar>
        </Workspace>

        <Pane>
          <PaneHead>
            <PaneTitle>数据透视表<Caret /></PaneTitle>
            <PaneActions><button aria-label="固定"><PinIcon /></button><button aria-label="关闭窗格"><CloseIcon /></button></PaneActions>
          </PaneHead>
          <Heading $top={21}><Triangle />字段列表</Heading>
          <Hint $in={17}>将字段拖动至数据透视表区域</Hint>
          <FieldBox>
            {FIELDS.map(([name, on]) => (
              <li key={name}><Field $on={on}><Check type="checkbox" defaultChecked={on} />{name}</Field></li>
            ))}
          </FieldBox>
          <Heading $top={26}><Triangle />数据透视表区域</Heading>
          <Hint>在下面区域中拖动字段</Hint>
          <Areas>
            {AREAS.map(a => (
              <div key={a.label}>
                <AreaLabel>
                  <AreaIcon><svg width="12" height="14" viewBox="0 0 12 14" fill="#cdd0d5" aria-hidden="true">{a.icon}</svg></AreaIcon>
                  {a.label}
                </AreaLabel>
                <AreaBox>
                  {a.value && <FieldSelect><select aria-label={a.label}><option>{a.value}</option></select><svg width="12" height="7" viewBox="0 0 12 7"><path d="M0 0h12L6 7z" fill="#6a6c70" /></svg></FieldSelect>}
                </AreaBox>
              </div>
            ))}
          </Areas>
        </Pane>

        <SideBar>
          <SideGrip />
          <SideButton aria-label="快捷"><RocketIcon /></SideButton>
          <SideButton aria-label="选择"><PointerIcon /></SideButton>
          <SideButton aria-label="属性"><SlidersIcon /></SideButton>
          <SideButton aria-label="数据透视表" $on><PivotIcon /></SideButton>
          <SideButton aria-label="素材"><GalleryIcon /></SideButton>
          <SideButton aria-label="技巧"><BulbIcon /></SideButton>
          <SideButton aria-label="帮助"><BookIcon /></SideButton>
          <SideFoot><button aria-label="更多窗格"><MoreIcon /></button></SideFoot>
        </SideBar>
      </Main>

      <StatusBar>
        <button aria-label="宏"><MacroIcon /></button>
        <VSep $h={22} $m="0 0 0 17px" />
        <StatusRight>
          <ModeTools>
            <MenuButton aria-label="护眼模式"><EyeIcon /></MenuButton>
            <MenuButton $gap={5} aria-label="阅读模式"><CrossIcon /><Caret /></MenuButton>
          </ModeTools>
          <VSep $h={22} $m="0 10px 0 16px" />
          <ViewButton aria-label="普通视图" $on><NormalViewIcon /></ViewButton>
          <ViewButton aria-label="页面布局"><PageViewIcon /></ViewButton>
          <ViewButton aria-label="分页预览"><BreakViewIcon /></ViewButton>
          <VSep $h={22} $m="0 12px 0 11px" />
          <ZoomLabel>100%<Caret /></ZoomLabel>
          <button aria-label="缩小"><Ico w={16} h={16} sw={3} color="#3d4763"><path d="M0 8h16" /></Ico></button>
          <Slider type="range" aria-label="缩放" defaultValue={46} />
          <button aria-label="放大"><Ico w={16} h={16} sw={3} color="#3d4763"><path d="M0 8h16M8 0v16" /></Ico></button>
          <FullButton aria-label="全屏"><FullIcon /></FullButton>
        </StatusRight>
      </StatusBar>

      <Watermark>CSDN @毛媛媛</Watermark>
      <ValueFieldDialog />
    </Page>
  );
}
